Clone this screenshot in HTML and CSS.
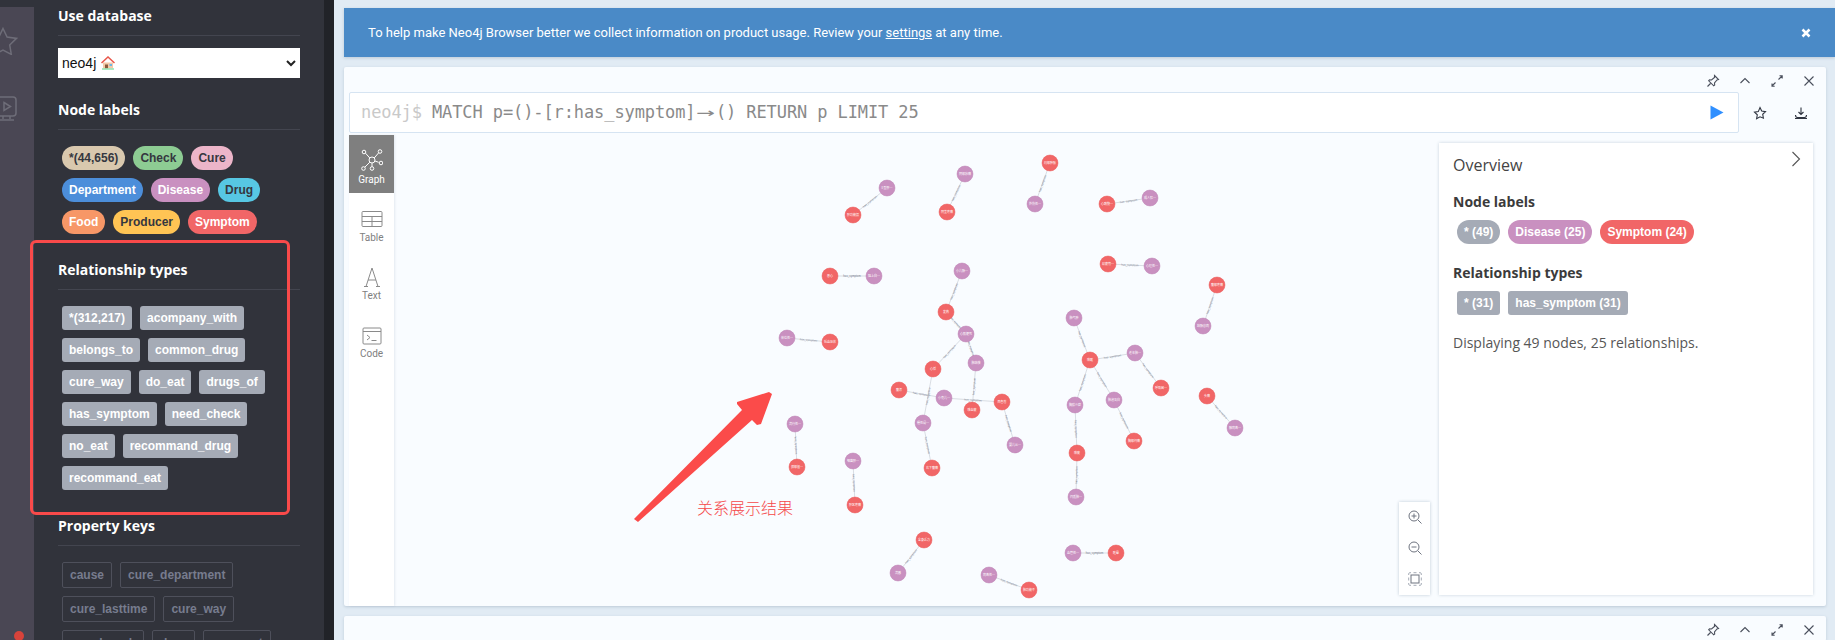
FILE: index.html
```html
<!DOCTYPE html>
<html lang="en">
<head>
<meta charset="utf-8">
<title>Neo4j Browser</title>
<link rel="stylesheet" href="styles.css">
</head>
<body>
<div class="app">
  <nav class="nav">
    <svg class="nav-star" width="18" height="28" viewBox="12 0 18 28"><path d="M15 1.5l4.1 8.6 9.4 1.3-6.8 6.6 1.6 9.4-8.3-4.4-8.3 4.4 1.6-9.4-6.8-6.6 9.4-1.3z"/></svg>
    <svg class="nav-monitor" width="17" height="26" viewBox="4 0 17 26"><rect x="1" y="1" width="19" height="19" rx="3"/><path d="M8 6.5l6.5 4-6.5 4zM7 20v3M14 20v3M3 24h15"/></svg>
    <span class="nav-dot"></span>
  </nav>

  <aside class="sidebar">
    <section class="section section-db">
      <h3 class="side-title">Use database</h3>
      <div class="db-select">
        <span>neo4j</span>
        <svg class="house" width="14" height="14" viewBox="0 0 14 14"><path class="house-wall" d="M2 6.500h10v6H2z"/><path class="house-door" d="M4 8.500h3v4H4z"/><path class="house-win" d="M8.500 8h2.500v2H8.500z"/><path class="house-roof" d="M0.500 7L7 1l6.500 6"/><path class="house-base" d="M1 13h12"/></svg>
        <svg class="chev" width="10" height="7" viewBox="0 0 10 7"><path d="M1 1l4 4 4-4"/></svg>
      </div>
    </section>

    <section class="section">
      <h3 class="side-title">Node labels</h3>
      <div class="tags">
        <span class="tag pill c-all dark">*(44,656)</span>
        <span class="tag pill c-check dark">Check</span>
        <span class="tag pill c-cure dark">Cure</span>
        <span class="tag pill c-dept">Department</span>
        <span class="tag pill c-disease">Disease</span>
        <span class="tag pill c-drug dark">Drug</span>
        <span class="tag pill c-food">Food</span>
        <span class="tag pill c-producer dark">Producer</span>
        <span class="tag pill c-symptom">Symptom</span>
      </div>
    </section>

    <section class="section">
      <h3 class="side-title">Relationship types</h3>
      <div class="tags">
        <span class="tag rel">*(312,217)</span>
        <span class="tag rel">acompany_with</span>
        <span class="tag rel">belongs_to</span>
        <span class="tag rel">common_drug</span>
        <span class="tag rel">cure_way</span>
        <span class="tag rel">do_eat</span>
        <span class="tag rel">drugs_of</span>
        <span class="tag rel">has_symptom</span>
        <span class="tag rel">need_check</span>
        <span class="tag rel">no_eat</span>
        <span class="tag rel">recommand_drug</span>
        <span class="tag rel">recommand_eat</span>
      </div>
    </section>

    <section class="section">
      <h3 class="side-title">Property keys</h3>
      <div class="tags">
        <span class="tag prop">cause</span>
        <span class="tag prop">cure_department</span>
        <span class="tag prop">cure_lasttime</span>
        <span class="tag prop">cure_way</span>
        <span class="tag prop">cured_prob</span>
        <span class="tag prop">desc</span>
        <span class="tag prop">easy_get</span>
      </div>
    </section>
  </aside>

  <div class="scrollbar"></div>

  <main class="main">
    <div class="banner">
      <span>To help make Neo4j Browser better we collect information on product usage. Review your <u>settings</u> at any time.</span>
      <svg class="banner-close" width="10" height="10" viewBox="0 0 10 10"><path d="M1.500 1.500l7 7M8.500 1.500l-7 7"/></svg>
    </div>

    <article class="card">
      <header class="card-head">
        <span class="head-btn"><svg width="14" height="14" viewBox="0 0 14 14"><path d="M8.500 1.500l4 4-1.500.5-2.500 3 .2 2-1 .8-5-5 .8-1 2 .2 3-2.500zM4.500 9.500L1.500 12.500"/></svg></span>
        <span class="head-btn"><svg width="14" height="14" viewBox="0 0 14 14"><path d="M2.500 9L7 4.500 11.500 9"/></svg></span>
        <span class="head-btn"><svg width="14" height="14" viewBox="0 0 14 14"><path d="M8.500 5.500L12 2M9.500 1.800h2.700v2.700M5.500 8.500L2 12M2 9.500v2.700h2.700"/></svg></span>
        <span class="head-btn"><svg width="14" height="14" viewBox="0 0 14 14"><path d="M2.500 2.500l9 9M11.500 2.500l-9 9"/></svg></span>
      </header>

      <div class="editor-row">
        <div class="editor">
          <code class="query"><span class="prompt">neo4j$</span> MATCH p=()-[r:has_symptom]<span class="lig">→</span>() RETURN p LIMIT 25</code>
          <svg class="play" width="14" height="15" viewBox="0 0 14 15"><path d="M0.500 0.500L13.500 7.500 0.500 14.500z"/></svg>
        </div>
        <span class="edit-btn"><svg width="14" height="14" viewBox="0 0 14 14"><path d="M7 1.500l1.700 3.600 3.800.5-2.800 2.700.7 3.900L7 10.800l-3.400 1.900.7-3.900-2.800-2.700 3.800-.5z"/></svg></span>
        <span class="edit-btn"><svg width="14" height="14" viewBox="0 0 14 14"><path d="M7 1.500v7M4.500 6L7 8.500 9.500 6M1.500 9c0 1.800.8 2.500 2 2.500h7c1.200 0 2-.7 2-2.500M1 12.500h12"/></svg></span>
      </div>

      <div class="card-body">
        <div class="tabs">
          <div class="tab tab-active">
            <svg width="22" height="22" viewBox="0 0 22 22"><circle cx="11" cy="11" r="3"/><circle cx="3" cy="3" r="1.800"/><circle cx="19" cy="2.500" r="1.800"/><circle cx="20" cy="14" r="1.800"/><circle cx="11" cy="19.500" r="1.800"/><circle cx="2.500" cy="19.500" r="1.800"/><path d="M4.500 4.200L8.800 9M17.700 3.800L13.200 9M17.600 13.300L14 12M11 14v3.700M3.800 18.200L8.800 13.200"/></svg>
            <span>Graph</span>
          </div>
          <div class="tab">
            <svg width="22" height="18" viewBox="0 1 22 18"><rect x="1" y="1.500" width="20" height="15" rx="1"/><path d="M1 6.500h20M1 11.500h20M11 6.500v10"/></svg>
            <span>Table</span>
          </div>
          <div class="tab">
            <svg width="18" height="20" viewBox="0 0 18 20"><path d="M1 19.500h4M13 19.500h4M3 19.500L9 1l6 18.500M5 13h8"/></svg>
            <span>Text</span>
          </div>
          <div class="tab">
            <svg width="20" height="18" viewBox="0 0 20 18"><rect x="1" y="1" width="18" height="16" rx="1"/><path d="M1 4.500h18M5 8l3 2.500-3 2.500M9.500 13.500h5"/></svg>
            <span>Code</span>
          </div>
        </div>

        <div class="graph">
          <svg class="canvas" width="1432" height="471" viewBox="394 135 1432 471">
            <g class="edges">
              <path id="e1" d="M853 215L887 188"/><text><textPath href="#e1" startOffset="50%">has_symptom</textPath></text>
              <path id="e2" d="M947 212L965 174"/><text><textPath href="#e2" startOffset="50%">has_symptom</textPath></text>
              <path id="e3" d="M1035 204L1050 163"/><text><textPath href="#e3" startOffset="50%">has_symptom</textPath></text>
              <path id="e4" d="M1107 204L1150 198"/><text><textPath href="#e4" startOffset="50%">has_symptom</textPath></text>
              <path id="e5" d="M830 276L874 276"/><text><textPath href="#e5" startOffset="50%">has_symptom</textPath></text>
              <path id="e6" d="M1108 264L1152 266"/><text><textPath href="#e6" startOffset="50%">has_symptom</textPath></text>
              <path id="e7" d="M1203 326L1217 285"/><text><textPath href="#e7" startOffset="50%">has_symptom</textPath></text>
              <path id="e8" d="M787 338L830 342"/><text><textPath href="#e8" startOffset="50%">has_symptom</textPath></text>
              <path id="e9" d="M946 312L962 271"/><text><textPath href="#e9" startOffset="50%">has_symptom</textPath></text>
              <path id="e10" d="M946 312L966 334"/><text><textPath href="#e10" startOffset="50%">has_symptom</textPath></text>
              <path id="e11" d="M933 369L966 334"/><text><textPath href="#e11" startOffset="50%">has_symptom</textPath></text>
              <path id="e12" d="M966 334L976 363"/><text><textPath href="#e12" startOffset="50%">has_symptom</textPath></text>
              <path id="e13" d="M972 410L976 363"/><text><textPath href="#e13" startOffset="50%">has_symptom</textPath></text>
              <path id="e14" d="M923 423L933 369"/><text><textPath href="#e14" startOffset="50%">has_symptom</textPath></text>
              <path id="e15" d="M923 423L932 468"/><text><textPath href="#e15" startOffset="50%">has_symptom</textPath></text>
              <path id="e16" d="M899 390L944 398"/><text><textPath href="#e16" startOffset="50%">has_symptom</textPath></text>
              <path id="e17" d="M944 398L1002 402"/><text><textPath href="#e17" startOffset="50%">has_symptom</textPath></text>
              <path id="e18" d="M1002 402L1015 445"/><text><textPath href="#e18" startOffset="50%">has_symptom</textPath></text>
              <path id="e19" d="M1074 318L1090 360"/><text><textPath href="#e19" startOffset="50%">has_symptom</textPath></text>
              <path id="e20" d="M1090 360L1135 353"/><text><textPath href="#e20" startOffset="50%">has_symptom</textPath></text>
              <path id="e21" d="M1135 353L1161 388"/><text><textPath href="#e21" startOffset="50%">has_symptom</textPath></text>
              <path id="e22" d="M1075 405L1090 360"/><text><textPath href="#e22" startOffset="50%">has_symptom</textPath></text>
              <path id="e23" d="M1090 360L1114 400"/><text><textPath href="#e23" startOffset="50%">has_symptom</textPath></text>
              <path id="e24" d="M1114 400L1134 441"/><text><textPath href="#e24" startOffset="50%">has_symptom</textPath></text>
              <path id="e25" d="M1075 405L1077 453"/><text><textPath href="#e25" startOffset="50%">has_symptom</textPath></text>
              <path id="e26" d="M1076 497L1077 453"/><text><textPath href="#e26" startOffset="50%">has_symptom</textPath></text>
              <path id="e27" d="M1207 396L1235 428"/><text><textPath href="#e27" startOffset="50%">has_symptom</textPath></text>
              <path id="e28" d="M795 424L797 467"/><text><textPath href="#e28" startOffset="50%">has_symptom</textPath></text>
              <path id="e29" d="M853 461L855 505"/><text><textPath href="#e29" startOffset="50%">has_symptom</textPath></text>
              <path id="e30" d="M898 573L924 540"/><text><textPath href="#e30" startOffset="50%">has_symptom</textPath></text>
              <path id="e31" d="M989 575L1029 590"/><text><textPath href="#e31" startOffset="50%">has_symptom</textPath></text>
              <path id="e32" d="M1073 553L1116 553"/><text><textPath href="#e32" startOffset="50%">has_symptom</textPath></text>
            </g>
            <g class="disease">
              <circle cx="887" cy="188" r="8"/><text x="887" y="188">E型肝…</text>
              <circle cx="965" cy="174" r="8"/><text x="965" y="174">阴部疖痛</text>
              <circle cx="1035" cy="204" r="8"/><text x="1035" y="204">外伤性…</text>
              <circle cx="1150" cy="198" r="8"/><text x="1150" y="198">成人肛…</text>
              <circle cx="874" cy="276" r="8"/><text x="874" y="276">阻上白…</text>
              <circle cx="962" cy="271" r="8"/><text x="962" y="271">小儿肠…</text>
              <circle cx="1152" cy="266" r="8"/><text x="1152" y="266">心理性…</text>
              <circle cx="1203" cy="326" r="8"/><text x="1203" y="326">结肠息肉</text>
              <circle cx="787" cy="338" r="8"/><text x="787" y="338">体位性…</text>
              <circle cx="966" cy="334" r="8"/><text x="966" y="334">心肌梗死</text>
              <circle cx="976" cy="363" r="8"/><text x="976" y="363">肺结核</text>
              <circle cx="944" cy="398" r="8"/><text x="944" y="398">小克儿…</text>
              <circle cx="1015" cy="445" r="8"/><text x="1015" y="445">婴儿从…</text>
              <circle cx="923" cy="423" r="8"/><text x="923" y="423">慢性阑…</text>
              <circle cx="1074" cy="318" r="8"/><text x="1074" y="318">肺气肿</text>
              <circle cx="1135" cy="353" r="8"/><text x="1135" y="353">老年肺…</text>
              <circle cx="1075" cy="405" r="8"/><text x="1075" y="405">胸膜炎症</text>
              <circle cx="1114" cy="400" r="8"/><text x="1114" y="400">肺泡蛋白</text>
              <circle cx="1076" cy="497" r="8"/><text x="1076" y="497">间质肺…</text>
              <circle cx="1235" cy="428" r="8"/><text x="1235" y="428">腺病毒…</text>
              <circle cx="795" cy="424" r="8"/><text x="795" y="424">流行性…</text>
              <circle cx="853" cy="461" r="8"/><text x="853" y="461">细菌肝…</text>
              <circle cx="898" cy="573" r="8"/><text x="898" y="573">流感</text>
              <circle cx="989" cy="575" r="8"/><text x="989" y="575">病毒性…</text>
              <circle cx="1073" cy="553" r="8"/><text x="1073" y="553">血管性…</text>
            </g>
            <g class="symptom">
              <circle cx="853" cy="215" r="8"/><text x="853" y="215">肝功能损</text>
              <circle cx="947" cy="212" r="8"/><text x="947" y="212">阴茎疼痛</text>
              <circle cx="1050" cy="163" r="8"/><text x="1050" y="163">局部肿胀</text>
              <circle cx="1107" cy="204" r="8"/><text x="1107" y="204">心跳快…</text>
              <circle cx="830" cy="276" r="8"/><text x="830" y="276">恶心</text>
              <circle cx="1108" cy="264" r="8"/><text x="1108" y="264">易疲劳…</text>
              <circle cx="1217" cy="285" r="8"/><text x="1217" y="285">腹部疼痛</text>
              <circle cx="830" cy="342" r="8"/><text x="830" y="342">低血压休</text>
              <circle cx="946" cy="312" r="8"/><text x="946" y="312">发热</text>
              <circle cx="933" cy="369" r="8"/><text x="933" y="369">心悸</text>
              <circle cx="899" cy="390" r="8"/><text x="899" y="390">腹泻</text>
              <circle cx="972" cy="410" r="8"/><text x="972" y="410">咳血痰</text>
              <circle cx="1002" cy="402" r="8"/><text x="1002" y="402">面色苍</text>
              <circle cx="932" cy="468" r="8"/><text x="932" y="468">右下腹痛</text>
              <circle cx="1090" cy="360" r="8"/><text x="1090" y="360">咳嗽</text>
              <circle cx="1161" cy="388" r="8"/><text x="1161" y="388">呼吸困…</text>
              <circle cx="1134" cy="441" r="8"/><text x="1134" y="441">胸部闷痛</text>
              <circle cx="1077" cy="453" r="8"/><text x="1077" y="453">咳痰</text>
              <circle cx="1207" cy="396" r="8"/><text x="1207" y="396">头痛</text>
              <circle cx="797" cy="467" r="8"/><text x="797" y="467">颈部僵…</text>
              <circle cx="855" cy="505" r="8"/><text x="855" y="505">肝区疼痛</text>
              <circle cx="924" cy="540" r="8"/><text x="924" y="540">全身乏力</text>
              <circle cx="1029" cy="590" r="8"/><text x="1029" y="590">肺功能不</text>
              <circle cx="1116" cy="553" r="8"/><text x="1116" y="553">眩晕</text>
            </g>
            <polygon class="arrow" points="634,519 742,410 737,404 737,402 769,392 772,394 761,424 757,425 752,420 638,522"/>
            <text class="note" x="697" y="514">关系展示结果</text>
          </svg>

          <div class="zoom-panel">
            <svg width="14" height="14" viewBox="0 0 14 14"><circle cx="6" cy="6" r="5"/><path d="M10 10l3.500 3.500M6 3.500v5M3.500 6h5"/></svg>
            <svg width="14" height="14" viewBox="0 0 14 14"><circle cx="6" cy="6" r="5"/><path d="M10 10l3.500 3.500M3.500 6h5"/></svg>
            <svg width="14" height="14" viewBox="0 0 14 14"><rect x="3" y="3" width="8" height="8"/><path class="dash" d="M3 .7H1.800Q.7.700.7 1.800V3M11 .7h1.200q1.100 0 1.100 1.100V3M3 13.300H1.800Q.7 13.300.7 12.200V11M11 13.300h1.200q1.100 0 1.100-1.100V11"/><path class="dash" d="M5.500.7h3M5.500 13.300h3M.7 5.500v3M13.300 5.500v3"/></svg>
          </div>

          <div class="overview">
            <svg class="overview-chev" width="10" height="16" viewBox="0 0 10 16"><path d="M1.500 1l7 7-7 7"/></svg>
            <h4 class="ov-title">Overview</h4>
            <h5 class="ov-head">Node labels</h5>
            <div class="tags">
              <span class="tag pill c-grey">* (49)</span>
              <span class="tag pill c-disease">Disease (25)</span>
              <span class="tag pill c-symptom">Symptom (24)</span>
            </div>
            <h5 class="ov-head ov-head-second">Relationship types</h5>
            <div class="tags">
              <span class="tag rel">* (31)</span>
              <span class="tag rel">has_symptom (31)</span>
            </div>
            <p class="ov-text">Displaying 49 nodes, 25 relationships.</p>
          </div>
        </div>
      </div>
    </article>

    <article class="card">
      <header class="card-head">
        <span class="head-btn"><svg width="14" height="14" viewBox="0 0 14 14"><path d="M8.500 1.500l4 4-1.500.5-2.500 3 .2 2-1 .8-5-5 .8-1 2 .2 3-2.500zM4.500 9.500L1.500 12.500"/></svg></span>
        <span class="head-btn"><svg width="14" height="14" viewBox="0 0 14 14"><path d="M2.500 9L7 4.500 11.500 9"/></svg></span>
        <span class="head-btn"><svg width="14" height="14" viewBox="0 0 14 14"><path d="M8.500 5.500L12 2M9.500 1.800h2.700v2.700M5.500 8.500L2 12M2 9.500v2.700h2.700"/></svg></span>
        <span class="head-btn"><svg width="14" height="14" viewBox="0 0 14 14"><path d="M2.500 2.500l9 9M11.500 2.500l-9 9"/></svg></span>
      </header>
    </article>
  </main>

  <div class="callout"></div>
</div>
</body>
</html>
```

FILE: styles.css
```css
* { box-sizing: border-box; }

html, body {
  margin: 0;
  height: 640px;
  overflow: hidden;
}

body {
  font-family: "Liberation Sans", "Noto Sans CJK SC", sans-serif;
  background: #e1ebf4;
}

.app {
  position: relative;
  display: flex;
  width: 1835px;
  height: 640px;
  overflow: hidden;
  background: #31333b;
}

/* left icon rail */
.nav {
  flex: none;
  display: flex;
  flex-direction: column;
  width: 34px;
  height: 633px;
  margin-top: 7px;
  padding-top: 20px;
  background: #4a4754;
  overflow: hidden;
}

.nav svg { fill: none; stroke: #6e6d78; stroke-width: 1.5; }
.nav-star { margin-bottom: 41px; }

.nav-dot {
  width: 10px;
  height: 10px;
  margin: auto 0 -1px 14px;
  flex: none;
  border-radius: 50%;
  background: #d8433b;
}

/* sidebar */
.sidebar {
  flex: none;
  width: 290px;
  height: 640px;
  padding: 6px 24px 0;
  background: #31333b;
  overflow: hidden;
}

.section { padding-bottom: 26px; }
.section-db { padding-bottom: 22px; }

.side-title {
  margin: 0 0 16px;
  padding-bottom: 9px;
  border-bottom: 1px solid #43454f;
  font: 700 14px/20px "Open Sans", sans-serif;
  color: #fff;
}

.section-db .side-title { margin-bottom: 12px; }

.db-select {
  display: flex;
  align-items: center;
  gap: 5px;
  height: 30px;
  padding: 0 4px;
  background: #fff;
  color: #111;
  font-size: 14px;
}

.house { flex: none; }
.house-wall { fill: #f4c9a8; }
.house-door { fill: #8a5a3c; }
.house-win { fill: #6ab7e6; }
.house-roof { fill: none; stroke: #e8564a; stroke-width: 1.500; }
.house-base { fill: none; stroke: #8fe3b0; stroke-width: 1.500; }

.chev {
  margin-left: auto;
  fill: none;
  stroke: #222;
  stroke-width: 2;
}

.tags {
  display: flex;
  flex-wrap: wrap;
  gap: 8px;
  padding-left: 4px;
}

.tag {
  flex: none;
  height: 24px;
  padding: 0 7px;
  font-size: 12px;
  font-weight: 700;
  line-height: 24px;
  color: #fff;
  white-space: nowrap;
}

.pill { border-radius: 12px; }
.dark { color: #35373f; }
.rel { border-radius: 3px; background: #a5abb6; }

.prop {
  height: 26px;
  border: 1px solid #4e505b;
  border-radius: 2px;
  color: #777c8e;
  line-height: 24px;
}

.c-all { background: #d9c8ae; }
.c-check { background: #8dcc93; }
.c-cure { background: #ecb5c9; }
.c-dept { background: #4c8eda; }
.c-disease { background: #c990c0; }
.c-drug { background: #57c7e3; }
.c-food { background: #f79767; }
.c-producer { background: #ffc454; }
.c-symptom { background: #f16667; }
.c-grey { background: #a5abb6; }

.scrollbar {
  flex: none;
  width: 10px;
  background: #212328;
}

/* main column */
.main {
  flex: 1;
  min-width: 0;
  padding: 8px 0 0 10px;
  background: #e1ebf4;
}

.banner {
  display: flex;
  align-items: center;
  justify-content: space-between;
  height: 49px;
  margin-bottom: 10px;
  padding: 0 24px;
  background: #4a8ac7;
  color: #fff;
  font: 400 13px Roboto, sans-serif;
  box-shadow: 0 1px 3px rgba(40, 70, 100, .2);
}

.banner u { text-decoration: underline; }

.banner-close { fill: none; stroke: #fff; stroke-width: 2.500; }

.card {
  width: 1482px;
  margin-bottom: 10px;
  border-radius: 2px;
  background: #f9fcff;
  box-shadow: 0 1px 3px rgba(60, 90, 120, .22);
}

.card-head {
  display: flex;
  justify-content: flex-end;
  height: 25px;
  padding: 7px 1px 0 0;
}

.head-btn {
  display: flex;
  justify-content: center;
  width: 32px;
}

.head-btn svg,
.edit-btn svg {
  fill: none;
  stroke: #4a4f5c;
  stroke-width: 1.100;
}

.editor-row {
  display: flex;
  align-items: stretch;
  padding: 0 5px;
}

.editor {
  flex: 1;
  display: flex;
  align-items: center;
  justify-content: space-between;
  height: 41px;
  padding: 0 14px 2px 11px;
  border: 1px solid #d6e4f2;
  border-radius: 2px;
  background: #fff;
}

.query {
  font: 400 17px "DejaVu Sans Mono", monospace;
  letter-spacing: -.1px;
  color: #8a8a8a;
  white-space: pre;
}

.prompt { color: #c9c9c9; }
.lig { display: inline-block; width: 2ch; text-align: center; transform: scaleX(1.8); }
.play { fill: #2f8fff; margin-top: 2px; }

.edit-btn {
  display: flex;
  align-items: center;
  justify-content: center;
  width: 41px;
}

.edit-btn svg { stroke: #2f3440; }

.card-body {
  display: flex;
  height: 471px;
  margin-top: 2px;
  padding-left: 5px;
}

.tabs {
  flex: none;
  width: 45px;
  background: #fff;
  box-shadow: 1px 0 2px rgba(80, 110, 140, .12);
}

.tab {
  display: flex;
  flex-direction: column;
  align-items: center;
  justify-content: flex-end;
  gap: 3px;
  height: 58px;
  padding-bottom: 8px;
  color: #808080;
  font: 400 10px Roboto, sans-serif;
}

.tab svg { fill: none; stroke: #8a8a8a; stroke-width: 1; }

.tab-active { background: #7f7f7f; color: #fff; }
.tab-active svg { stroke: #fff; }

.graph {
  position: relative;
  flex: 1;
  min-width: 0;
}

.canvas { display: block; }

.edges path { fill: none; stroke: #c3c8d0; stroke-width: .6; }

.edges text {
  font-size: 2.800px;
  fill: #7c8391;
  text-anchor: middle;
  dominant-baseline: central;
}

.disease circle { fill: #c990c0; stroke: #bd83b4; stroke-width: .5; }
.symptom circle { fill: #f16667; stroke: #ea5a5b; stroke-width: .5; }

.disease text,
.symptom text {
  fill: #fff;
  font: 400 3px "Noto Sans CJK SC", sans-serif;
  text-anchor: middle;
  dominant-baseline: central;
}

.arrow { fill: #fb4b4a; }

.canvas .note {
  fill: #f5484a;
  font: 300 16px "Noto Sans CJK SC", sans-serif;
}

.zoom-panel {
  position: absolute;
  left: 1005px;
  top: 367px;
  display: flex;
  flex-direction: column;
  align-items: center;
  gap: 17px;
  width: 31px;
  height: 93px;
  padding-top: 8px;
  background: #fff;
  box-shadow: 0 0 3px rgba(60, 90, 120, .3);
}

.zoom-panel svg {
  flex: none;
  fill: none;
  stroke: #6f7480;
  stroke-width: 1;
}

.zoom-panel .dash { stroke: #a5abb6; }

.overview {
  position: absolute;
  right: 13px;
  top: 8px;
  width: 374px;
  height: 452px;
  padding: 10px 14px;
  background: #fff;
  box-shadow: 0 0 3px rgba(60, 90, 120, .25);
  color: #444;
}

.overview-chev {
  position: absolute;
  right: 12px;
  top: 8px;
  fill: none;
  stroke: #555;
  stroke-width: 1.100;
}

.ov-title {
  margin: 0 0 15px;
  font: 400 16px/24px "Open Sans", sans-serif;
  color: #444;
}

.ov-head {
  margin: 0 0 8px;
  font: 700 14px/20px "Open Sans", sans-serif;
  color: #3b3b3b;
}

.ov-head-second { margin-top: 19px; }

.ov-text {
  margin: 18px 0 0;
  font: 400 14px/20px "Open Sans", sans-serif;
  color: #565656;
}

/* red annotation frame drawn over the sidebar */
.callout {
  position: absolute;
  left: 30px;
  top: 240px;
  width: 260px;
  height: 275px;
  border: 3.500px solid #f94a4a;
  border-radius: 6px;
  pointer-events: none;
}
```
